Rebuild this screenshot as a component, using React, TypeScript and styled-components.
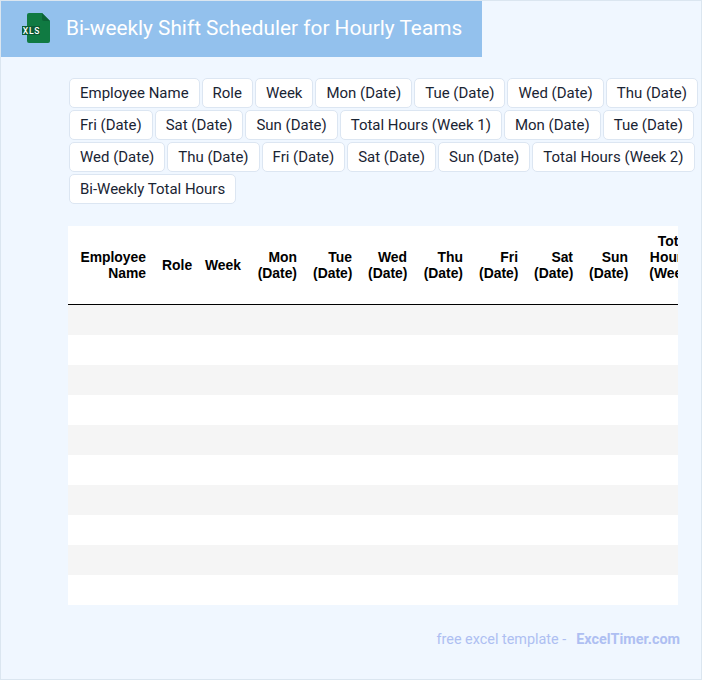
import React from "react";
import styled, { createGlobalStyle } from "styled-components";

const Global = createGlobalStyle`
  html, body { margin: 0; padding: 0; background: #f0f7ff; }
  * { box-sizing: border-box; }
`;

const Page = styled.div`
  width: 702px;
  height: 680px;
  border: 1px solid #dbe6f0;
  background: #f0f7ff;
  font-family: Roboto, sans-serif;
  display: flex;
  flex-direction: column;
  overflow: hidden;
`;

const Banner = styled.header`
  width: 481px;
  height: 56px;
  background: #93c1ed;
  display: flex;
  align-items: center;
  padding: 0 0 2px 21px;
  gap: 15px;
  flex: none;
`;

const Title = styled.h1`
  margin: 0;
  color: #fff;
  font-size: 20.8px;
  font-weight: 400;
  white-space: nowrap;
`;

const Chips = styled.div`
  display: flex;
  flex-wrap: wrap;
  gap: 2px;
  margin: 21px 0 0 68px;
  width: 632px;
`;

const Chip = styled.span`
  height: 30px;
  padding: 0 10px;
  display: flex;
  align-items: center;
  background: #fff;
  border: 1px solid #dce6f2;
  border-radius: 5px;
  color: #1a2433;
  font-size: 14.98px;
  white-space: nowrap;
`;

const TableClip = styled.div`
  margin: 22px 0 0 67px;
  width: 610px;
  overflow: hidden;
  flex: none;
`;

const Table = styled.table`
  border-collapse: separate;
  border-spacing: 0;
  table-layout: fixed;
  width: 1153px;
  background: #fff;
`;

const Head = styled.th`
  height: 79px;
  padding: 0 8px;
  border-bottom: 1px solid #000;
  color: #000;
  font: bold 13.9px/16px "Liberation Sans", Arial, sans-serif;
  text-align: right;
  vertical-align: middle;
`;

const Row = styled.tr<{ $shaded: boolean }>`
  height: 30px;
  background: ${(p) => (p.$shaded ? "#f5f5f5" : "#fff")};
`;

const Cell = styled.td`
  padding: 0;
`;

const Footer = styled.footer`
  margin: 26px 21px 0 0;
  display: flex;
  justify-content: flex-end;
  gap: 10px;
  color: #aebff2;
  font-size: 14.4px;
  line-height: 18px;
`;

const Brand = styled.strong`
  font-weight: 700;
`;

const chips = [
  "Employee Name", "Role", "Week", "Mon (Date)", "Tue (Date)", "Wed (Date)", "Thu (Date)",
  "Fri (Date)", "Sat (Date)", "Sun (Date)", "Total Hours (Week 1)",
  "Mon (Date)", "Tue (Date)", "Wed (Date)", "Thu (Date)", "Fri (Date)", "Sat (Date)", "Sun (Date)",
  "Total Hours (Week 2)", "Bi-Weekly Total Hours",
];

const widths = [86, 43, 51, 57, 55, 55, 56, 55, 55, 55, 62, 55, 55, 55, 55, 55, 55, 55, 60, 78];

const Logo = () => (
  <svg width="29" height="30" viewBox="0 0 29 30" aria-hidden="true">
    <path d="M5 2a2 2 0 0 1 2-2h13l8 8v20a2 2 0 0 1-2 2H7a2 2 0 0 1-2-2z" fill="#107a42" />
    <path d="M20 0l8 8h-6a2 2 0 0 1-2-2z" fill="#0c6337" />
    <rect x="0" y="13" width="18" height="9" fill="#0c5c34" />
    <text x="9.5" y="20.7" textAnchor="middle" fontSize="8.5" letterSpacing="0.8" fontFamily="Roboto, sans-serif" fontWeight="500" fill="#fff">XLS</text>
  </svg>
);

export default function App() {
  return (
    <Page>
      <Global />
      <Banner>
        <Logo />
        <Title>Bi-weekly Shift Scheduler for Hourly Teams</Title>
      </Banner>
      <Chips>
        {chips.map((c, i) => (
          <Chip key={i}>{c}</Chip>
        ))}
      </Chips>
      <TableClip>
        <Table>
          <colgroup>
            {widths.map((w, i) => (
              <col key={i} style={{ width: w }} />
            ))}
          </colgroup>
          <thead>
            <tr>
              {chips.map((c, i) => (
                <Head key={i}>{c}</Head>
              ))}
            </tr>
          </thead>
          <tbody>
            {Array.from({ length: 10 }, (_, r) => (
              <Row key={r} $shaded={r % 2 === 0}>
                {chips.map((_c, i) => (
                  <Cell key={i} />
                ))}
              </Row>
            ))}
          </tbody>
        </Table>
      </TableClip>
      <Footer>
        <span>free excel template -</span>
        <Brand>ExcelTimer.com</Brand>
      </Footer>
    </Page>
  );
}
